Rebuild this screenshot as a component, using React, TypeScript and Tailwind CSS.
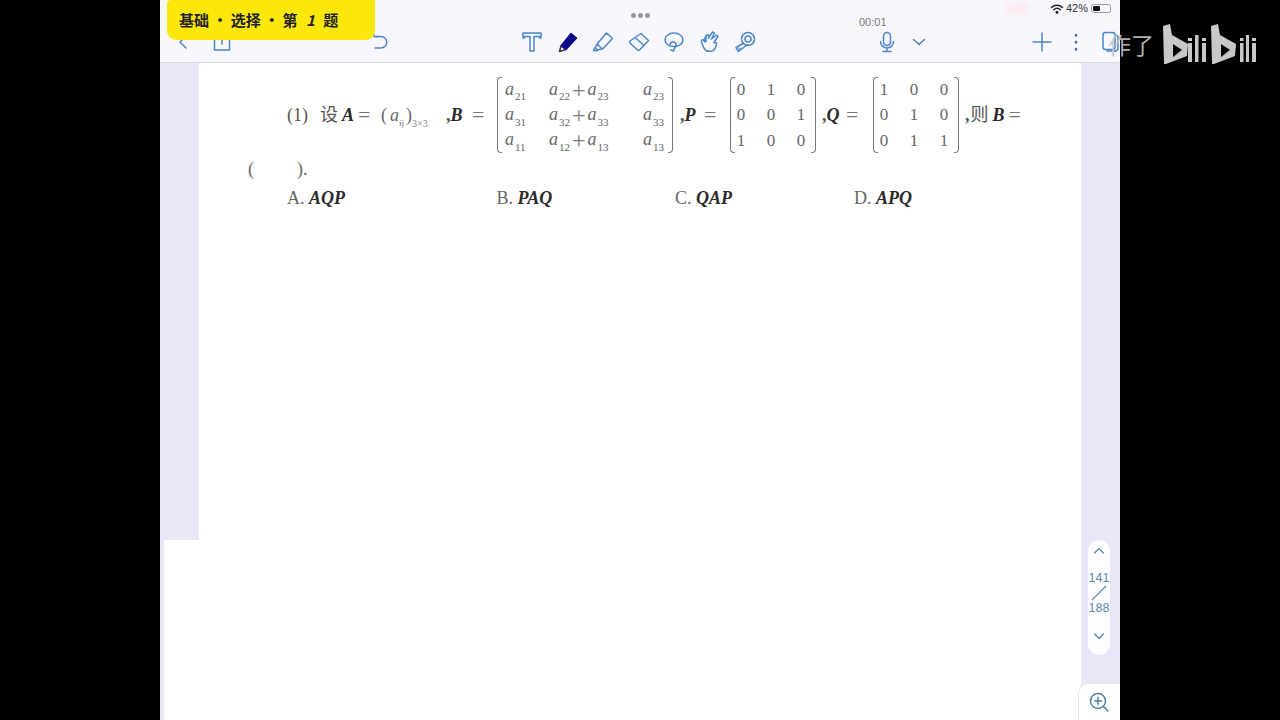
import React from "react";

const blue = "#4a86c8";

function Ico({ children, w = 24 }: { children: React.ReactNode; w?: number }) {
  return (
    <svg width={w} height={24} viewBox="0 0 24 24" fill="none" stroke={blue} strokeWidth={1.5} strokeLinecap="round" strokeLinejoin="round" className="shrink-0">
      {children}
    </svg>
  );
}

function A({ s }: { s: string }) {
  return (
    <span className="whitespace-nowrap">
      <i className="text-[18px]">a</i>
      <sub className="text-[11px] ml-[1px] align-[-3px] leading-none">{s}</sub>
    </span>
  );
}

function Bracket({ side }: { side: "l" | "r" }) {
  return (
    <div
      className={
        side === "l"
          ? "w-[5px] shrink-0 border-l border-t border-b border-[#777] rounded-l-[4px]"
          : "w-[5px] shrink-0 border-r border-t border-b border-[#777] rounded-r-[4px]"
      }
    />
  );
}

function NumMatrix({ v }: { v: number[] }) {
  return (
    <div className="flex h-[76px] w-[86px] justify-between shrink-0">
      <Bracket side="l" />
      <div className="grid grid-cols-[22px_22px_22px] gap-x-[8px] grid-rows-3 items-center justify-items-center absolute-none -ml-[5px] mr-[-1px] text-[17px] text-[#666] leading-none">
        {v.map((n, i) => (
          <span key={i}>{n}</span>
        ))}
      </div>
      <Bracket side="r" />
    </div>
  );
}

const rows = [
  ["21", "22", "23", "23"],
  ["31", "32", "33", "33"],
  ["11", "12", "13", "13"],
];

function BigMatrix() {
  return (
    <div className="flex h-[76px] w-[176px] shrink-0 justify-between">
      <Bracket side="l" />
      <div className="grid grid-cols-[44px_94px_22px] grid-rows-3 items-center text-[#666] leading-none w-[160px]">
        {rows.map((r) => (
          <React.Fragment key={r[0]}>
            <A s={r[0]} />
            <span className="whitespace-nowrap flex items-center">
              <A s={r[1]} />
              <span className="text-[24px] leading-none mx-[2px] text-[#777]">+</span>
              <A s={r[2]} />
            </span>
            <A s={r[3]} />
          </React.Fragment>
        ))}
      </div>
      <Bracket side="r" />
    </div>
  );
}

function Bi({ children }: { children: React.ReactNode }) {
  return <b className="italic text-[#2a2a2a] font-bold">{children}</b>;
}

function Eq() {
  return <span className="text-[#777] text-[22px] leading-none">=</span>;
}

function Logo() {
  return (
    <svg width={100} height={50} viewBox="0 0 100 50" fill="#c8c8c8" aria-label="bilibili">
      <path d="M3 6 L10 4 L12 15 L28 24 L27 36 L6 44 L4 44 Z" />
      <path d="M13 24 L13 37 L22 30 Z" fill="#000" />
      <path d="M28 18h4v3h-4z M28 23h4v19h-4z" />
      <path d="M35 15h3.5v27H35z" />
      <path d="M42 18h4v3h-4z M42 23h4v19h-4z" />
      <path d="M51 6 L58 4 L60 15 L76 24 L75 36 L54 44 L52 44 Z" />
      <path d="M61 24 L61 37 L70 30 Z" fill="#000" />
      <path d="M80 18h3.5v3H80z M80 23h3.5v19H80z" />
      <path d="M86 15h3v27h-3z" />
      <path d="M92 18h4v3h-4z M92 23h4v19h-4z" />
    </svg>
  );
}

function Toolbar() {
  return (
    <div className="flex items-center h-[24px] mt-[5px] pl-[11px]">
      <Ico><path d="M15 6l-6 6 6 6" /></Ico>
      <div className="ml-[15px]">
        <Ico><path d="M12 4v10 M6 8H4.500v12h15V8H18" /></Ico>
      </div>
      <div className="ml-[132px]">
        <Ico><path d="M8 6.500h7a4.500 4.500 0 0 1 0 11.500H9 M8 6.500l-.2-3 M8 6.500l3 .5" /></Ico>
      </div>
      <div className="ml-[130px] flex items-center gap-[11.500px]">
        <Ico><path d="M3 3h18v5h-1.500V6.500h-5.500V21h-4V6.500H4.500V8H3z" /></Ico>
        <Ico>
          <path d="M15 3.500l5.500 4.500L10 19.500 5 16z" fill="#0a0a8c" stroke="#0a0a8c" />
          <path d="M5 16l-1.500 5.500 6.500-2" stroke="#333" />
        </Ico>
        <Ico><path d="M15.500 3l6 5.500-10 10.500-5.500-5z M6 14l-2 3.500 2.500 2.500 4-1 M4 17.500l-1.500 3h4" /></Ico>
        <Ico><path d="M14 3.500l7.500 7-9 9.500a1.500 1.500 0 0 1-2 0L3 13a1.500 1.500 0 0 1 0-2z M8 7.500l8.500 7.500" /></Ico>
        <Ico><path d="M12 3c5 0 9 3 9 7s-4 6.500-9 6.500S3 14 3 10s4-7 9-7z M8 15c0-4 6-4 6 0 0 2-1.500 2.500-2.500 6-2-1-3-1-3-1" /></Ico>
        <Ico><path d="M7 7.500V12L5 9.500c-2 .5-2 2-1 4 .8 2 1.500 5.500 4 7 3 1.500 8 1 9-2 .8-2 2-4 1.500-5.500l-2.500-.5 4-6-1.500-1.500-5 4 3-6-2-1-4 6V5h-2.500v6.500z" /></Ico>
        <Ico>
          <circle cx="15" cy="9" r="6.500" />
          <circle cx="15" cy="9" r="3" />
          <path d="M10 13.500L3 17.500 5.500 21.500l9-7 M6 18l1 1" />
        </Ico>
      </div>
      <div className="ml-[118px] flex items-center gap-[8px]">
        <Ico>
          <rect x="8.500" y="2.500" width="7" height="13" rx="3.500" />
          <path d="M5.500 11.500a6.500 6.500 0 0 0 13 0 M12 18v3.500 M8 21.500h8" />
        </Ico>
        <Ico><path d="M6.500 9.500l5.500 5 5.500-5" stroke="#5a7fae" /></Ico>
      </div>
      <div className="ml-[99px] flex items-center gap-[10px]">
        <Ico><path d="M12 3v18 M3 12h18" /></Ico>
        <Ico><path d="M12 5v.500 M12 12v.500 M12 19v.500" strokeWidth={2.600} stroke="#4a6fb8" /></Ico>
        <Ico>
          <rect x="5" y="2.500" width="12" height="17" rx="2.500" />
          <path d="M17 5.500h1a2 2 0 0 1 2 2V18a3 3 0 0 1-3 3H9" />
        </Ico>
      </div>
    </div>
  );
}

export default function App() {
  return (
    <div className="relative flex w-[1280px] h-[720px] bg-black overflow-hidden font-['Liberation_Serif','Noto_Sans_CJK_SC',serif]">
      <div className="w-[160px] shrink-0" />

      <main className="w-[960px] shrink-0 flex flex-col relative">
        {/* header */}
        <header className="relative h-[63px] shrink-0 bg-[#f8f7fe] border-b border-[#dcdce6] pt-[13px]">
          <div className="flex h-[19px] items-center justify-center gap-[2px] -mt-[7px]">
            <span className="w-[5px] h-[5px] rounded-full bg-[#999]" />
            <span className="w-[5px] h-[5px] rounded-full bg-[#999]" />
            <span className="w-[5px] h-[5px] rounded-full bg-[#999]" />
          </div>
          <Toolbar />
          <span className="absolute left-[699px] top-[16px] text-[11px] leading-[13px] text-[#777] font-['Liberation_Sans',sans-serif]">00:01</span>
          <div className="absolute left-[890px] top-[2px] flex items-center font-['Liberation_Sans',sans-serif] text-[11px] leading-[13px] text-[#333]">
            <svg width="14" height="10" viewBox="0 0 14 10" fill="none" stroke="#222" strokeWidth="1.500" strokeLinecap="round">
              <path d="M1.500 3.500a8 8 0 0 1 11 0 M3.700 5.700a5 5 0 0 1 6.600 0" />
              <circle cx="7" cy="8.200" r="0.800" fill="#222" />
            </svg>
            <span className="ml-[2px]">42%</span>
            <span className="ml-[3px] flex items-center w-[20px] h-[9px] border border-[#999] rounded-[2.500px] p-[1px]">
              <span className="w-[7px] h-full bg-[#111] rounded-[1px]" />
            </span>
          </div>
          <span className="absolute left-[845px] top-[3px] w-[24px] h-[11px] rounded-full bg-[#fdeaf0] blur-[3px]" />
        </header>

        {/* body */}
        <div className="flex flex-1 min-h-0">
          <div className="w-[39px] shrink-0 flex flex-col bg-[#e7e7f8]">
            <div className="h-[477px]" />
            <div className="flex-1 ml-[4px] bg-white" />
          </div>

          <section className="flex-1 bg-white pt-[14px] text-[18px] text-[#555] leading-none">
            <div className="flex items-center h-[76px] pl-[88px]">
              <span className="w-[33px] whitespace-nowrap">(1)</span>
              <span className="w-[22px]">设</span>
              <span className="w-[16px]"><Bi>A</Bi></span>
              <span className="w-[23px]"><Eq /></span>
              <span className="w-[60px] whitespace-nowrap text-[#666]">
                (<i className="ml-[3px]">a</i><sub className="text-[9px] align-[-3px]">ij</sub>
                <span className="ml-[2px]">)</span>
                <sub className="text-[10px] align-[-3px] text-[#888]">3×3</sub>
              </span>
              <span className="w-[30px] ml-[5px] whitespace-nowrap font-bold">,<Bi>B</Bi></span>
              <span className="w-[26px] -ml-[5px] pl-[1px]"><Eq /></span>
              <BigMatrix />
              <span className="w-[24px] ml-[7px] whitespace-nowrap font-bold">,<Bi>P</Bi></span>
              <span className="w-[26px]"><Eq /></span>
              <NumMatrix v={[0, 1, 0, 0, 0, 1, 1, 0, 0]} />
              <span className="w-[24px] ml-[6px] whitespace-nowrap font-bold">,<Bi>Q</Bi></span>
              <span className="w-[27px]"><Eq /></span>
              <NumMatrix v={[1, 0, 0, 0, 1, 0, 0, 1, 1]} />
              <span className="ml-[6px] whitespace-nowrap font-bold">,</span>
              <span className="ml-[1px] text-[18px] whitespace-nowrap">则</span>
              <span className="ml-[4px]"><Bi>B</Bi></span>
              <span className="ml-[4px]"><Eq /></span>
            </div>
            <div className="mt-[4px] pl-[49px] h-[24px] flex items-center text-[#666]">
              <span className="w-[49px]">(</span>
              <span>).</span>
            </div>
            <div className="mt-[5px] pl-[88px] flex items-center h-[24px] text-[#666]">
              <span className="w-[209.500px]">A. <Bi>AQP</Bi></span>
              <span className="w-[178.500px]">B. <Bi>PAQ</Bi></span>
              <span className="w-[179px]">C. <Bi>QAP</Bi></span>
              <span>D. <Bi>APQ</Bi></span>
            </div>
          </section>

          <div className="w-[39px] shrink-0 bg-[#e7e7f8]" />
        </div>

        {/* overlays */}
        <div className="absolute left-[7px] top-0 w-[208px] h-[40px] bg-[#fbe70c] rounded-b-[9px] rounded-tl-[4px] flex items-center pl-[12px] text-[15px] font-bold text-[#222] whitespace-pre font-['Noto_Sans_CJK_SC',sans-serif]">
          基础 • 选择 • 第 <i className="mx-[5px]">1</i> 题
        </div>

        <nav className="absolute left-[928px] top-[540px] w-[22px] h-[115px] bg-[#fdfdff] rounded-full flex flex-col items-center text-[12.500px] leading-[14px] text-[#5c86b4] font-['Liberation_Sans',sans-serif] py-[4px]">
          <svg width="14" height="14" viewBox="0 0 14 14" fill="none" stroke="#5c86b4" strokeWidth="1.300" strokeLinecap="round" strokeLinejoin="round">
            <path d="M2.500 9L7 4.500 11.500 9" />
          </svg>
          <span className="mt-[13px]">141</span>
          <svg width="18" height="16" viewBox="0 0 18 16" fill="none" stroke="#5c86b4" strokeWidth="1.100">
            <path d="M2 15L16 1" />
          </svg>
          <span>188</span>
          <svg className="mt-[14px]" width="14" height="14" viewBox="0 0 14 14" fill="none" stroke="#5c86b4" strokeWidth="1.300" strokeLinecap="round" strokeLinejoin="round">
            <path d="M2.500 5L7 9.500 11.500 5" />
          </svg>
        </nav>

        <div className="absolute left-[918px] top-[683px] w-[42px] h-[37px] bg-white border-l border-t border-[#e4e4ee] rounded-tl-[10px] flex items-center pl-[9px]">
          <svg width="22" height="22" viewBox="0 0 22 22" fill="none" stroke="#4f80a8" strokeWidth="1.500" strokeLinecap="round">
            <circle cx="10" cy="10" r="7.500" />
            <path d="M10 6.500v7 M6.500 10h7 M15.500 15.500L20 20" />
          </svg>
        </div>
      </main>

      <div className="w-[160px] shrink-0" />

      {/* watermark */}
      <div className="absolute left-[1108px] top-[25px] flex items-end">
        <span className="text-[23px] leading-none mb-[9px] text-[#c8c8c8]/90 font-['Noto_Sans_CJK_SC',sans-serif]">作了</span>
        <span className="-ml-[-6px] -mb-[5px] -mt-[5px]"><Logo /></span>
      </div>
    </div>
  );
}
